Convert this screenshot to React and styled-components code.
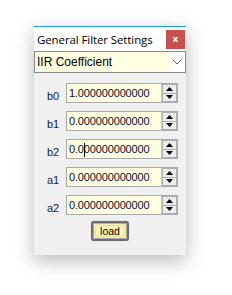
import styled, { createGlobalStyle } from "styled-components";

const Global = createGlobalStyle`
  html, body {
    margin: 0;
    padding: 0;
    background: #ffffff;
  }
`;

const Page = styled.div`
  width: 232px;
  height: 295px;
  padding: 26px 0 0 34px;
  box-sizing: border-box;
  font-family: "Liberation Sans", Arial, sans-serif;
`;

const Window = styled.div`
  width: 152px;
  box-sizing: border-box;
  border-top: 1px solid #1ba1e2;
  background: #f0f0f0;
  box-shadow: 0 6px 18px rgba(0, 0, 0, 0.28);
`;

const TitleBar = styled.div`
  height: 24px;
  background: #ffffff;
  display: flex;
  align-items: center;
  justify-content: space-between;
  padding-left: 3px;
`;

const Title = styled.span`
  font-family: "Open Sans", "Noto Sans", sans-serif;
  font-size: 11.5px;
  color: #000;
  letter-spacing: -0.1px;
`;

const CloseButton = styled.div`
  width: 19px;
  height: 19px;
  margin-right: 1px;
  background: #c75050;
  color: #fff;
  font-family: "DejaVu Sans", sans-serif;
  font-weight: bold;
  font-size: 9px;
  display: flex;
  align-items: center;
  justify-content: center;
`;

const Select = styled.div`
  height: 22px;
  box-sizing: border-box;
  border: 1px solid #8a8a8a;
  background: #ffffff;
  display: flex;
`;

const SelectValue = styled.div`
  width: 132px;
  background: #ffffe1;
  display: flex;
  align-items: center;
  padding-left: 2px;
  font-size: 12px;
  color: #000;
`;

const Chevron = styled.div`
  flex: 1;
  display: flex;
  align-items: center;
  justify-content: center;
`;

const Body = styled.div`
  padding: 10px 0 14px;
  display: flex;
  flex-direction: column;
  gap: 8px;
`;

const Row = styled.div`
  display: flex;
  align-items: center;
  height: 20px;
`;

const Label = styled.span`
  width: 32px;
  box-sizing: border-box;
  padding-left: 13px;
  padding-top: 6px;
  font-size: 11px;
  color: #101c48;
`;

const Input = styled.div`
  width: 112px;
  height: 20px;
  box-sizing: border-box;
  border: 1px solid #a8a8a8;
  background: #ffffe1;
  display: flex;
  align-items: center;
  justify-content: space-between;
`;

const Value = styled.span`
  padding-left: 2px;
  font-size: 11px;
  letter-spacing: -0.15px;
  color: #0a1030;
  position: relative;
`;

const Caret = styled.span`
  position: absolute;
  left: 17px;
  top: 0px;
  width: 1px;
  height: 14px;
  background: #000;
`;

const Spinner = styled.div`
  width: 15px;
  height: 18px;
  display: flex;
  flex-direction: column;
  border-left: 1px solid #c8c8c8;
`;

const SpinHalf = styled.div`
  flex: 1;
  background: #ececec;
  border: 1px solid #b0b0b0;
  border-top: ${(p) => (p.$down ? "none" : "1px solid #b0b0b0")};
  display: flex;
  align-items: center;
  justify-content: center;
`;

const Footer = styled.div`
  display: flex;
  justify-content: center;
  margin-top: -2px;
`;

const LoadButton = styled.div`
  width: 38px;
  height: 20px;
  box-sizing: border-box;
  border: 2px solid #6e6e6e;
  border-radius: 3px;
  box-shadow: inset 0 0 0 1px #a8a8a8, 0 0 1px #999;
  background: #f4f0b8;
  padding: 2px;
  display: flex;
`;

const LoadInner = styled.div`
  flex: 1;
  background: #f7f3bd;
  border: 1px solid #e8e09a;
  display: flex;
  align-items: center;
  justify-content: center;
  font-size: 10.5px;
  color: #000;
`;

const Up = () => (
  <svg width="7" height="4" viewBox="0 0 7 4">
    <path d="M3.5 0 L7 4 L0 4 Z" fill="#000" />
  </svg>
);

const Down = () => (
  <svg width="7" height="4" viewBox="0 0 7 4">
    <path d="M0 0 L7 0 L3.5 4 Z" fill="#000" />
  </svg>
);

const rows = [
  { name: "b0", value: "1.000000000000" },
  { name: "b1", value: "0.000000000000" },
  { name: "b2", value: "0.000000000000", caret: true },
  { name: "a1", value: "0.000000000000" },
  { name: "a2", value: "0.000000000000" },
];

export default function App() {
  return (
    <Page>
      <Global />
      <Window>
        <TitleBar>
          <Title>General Filter Settings</Title>
          <CloseButton>x</CloseButton>
        </TitleBar>
        <Select>
          <SelectValue>IIR Coefficient</SelectValue>
          <Chevron>
            <svg width="10" height="6" viewBox="0 0 10 6">
              <path d="M0.5 0.5 L5 5 L9.5 0.5" fill="none" stroke="#666" strokeWidth="1" />
            </svg>
          </Chevron>
        </Select>
        <Body>
          {rows.map((r) => (
            <Row key={r.name}>
              <Label>{r.name}</Label>
              <Input>
                <Value>
                  {r.value}
                  {r.caret && <Caret />}
                </Value>
                <Spinner>
                  <SpinHalf>
                    <Up />
                  </SpinHalf>
                  <SpinHalf $down>
                    <Down />
                  </SpinHalf>
                </Spinner>
              </Input>
            </Row>
          ))}
          <Footer>
            <LoadButton>
              <LoadInner>load</LoadInner>
            </LoadButton>
          </Footer>
        </Body>
      </Window>
    </Page>
  );
}
